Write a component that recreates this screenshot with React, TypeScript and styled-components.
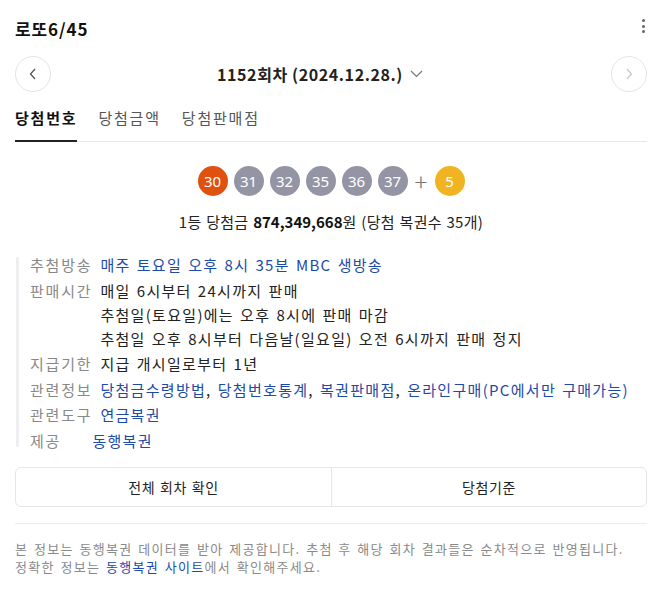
import React from "react";
import styled, { createGlobalStyle } from "styled-components";

const Global = createGlobalStyle`
  html, body { margin: 0; padding: 0; background: #fff; }
  body { font-family: "Noto Sans CJK KR", "Noto Sans", sans-serif; color: #222; }
  * { box-sizing: border-box; }
`;

const Page = styled.div`
  width: 658px;
  padding: 0 11px 0 15px;
`;

const Header = styled.div`
  display: flex;
  align-items: center;
  justify-content: space-between;
  height: 56px;
`;

const Title = styled.h1`
  margin: 0;
  font-size: 17px;
  font-weight: 700;
  color: #111;
  letter-spacing: 0.9px;
`;

const MoreBtn = styled.button`
  border: 0;
  background: none;
  padding: 0;
  width: 8px;
  height: 20px;
  display: flex;
  flex-direction: column;
  align-items: center;
  justify-content: center;
  gap: 2.5px;
  margin-right: 0;
  margin-top: -4px;
  span { width: 3px; height: 3px; border-radius: 50%; background: #666; }
`;

const NavRow = styled.div`
  display: flex;
  align-items: center;
  justify-content: space-between;
  height: 36px;
`;

const CircleBtn = styled.button<{ $disabled?: boolean }>`
  width: 36px;
  height: 36px;
  border-radius: 50%;
  border: 1px solid #e4e4e4;
  background: #fff;
  padding: 0;
  display: flex;
  align-items: center;
  justify-content: center;
  svg { stroke: ${(p) => (p.$disabled ? "#c8c8c8" : "#555")}; }
`;

const RoundTitle = styled.div`
  display: flex;
  align-items: center;
  gap: 7px;
  margin-right: 22px;
  font-size: 16px;
  font-weight: 700;
  color: #222;
  letter-spacing: 0.6px;
`;

const Tabs = styled.div`
  display: flex;
  gap: 21px;
  margin-top: 8px;
  border-bottom: 1px solid #e8e8e8;
`;

const Tab = styled.div<{ $active?: boolean }>`
  font-size: 15px;
  line-height: 24px;
  padding: 6px 0 10px;
  letter-spacing: 1.8px;
  color: ${(p) => (p.$active ? "#111" : "#555")};
  font-weight: ${(p) => (p.$active ? 700 : 400)};
  border-bottom: 2px solid ${(p) => (p.$active ? "#222" : "transparent")};
  margin-bottom: -1px;
`;

const Balls = styled.div`
  display: flex;
  justify-content: center;
  align-items: center;
  gap: 6px;
  margin-top: 24px;
`;

const Ball = styled.div<{ $color: string }>`
  width: 30px;
  height: 30px;
  border-radius: 50%;
  background: ${(p) => p.$color};
  color: #fff;
  font-size: 15px;
  display: flex;
  align-items: center;
  justify-content: center;
  font-family: "Noto Sans", "Noto Sans CJK KR", sans-serif;
`;

const Plus = styled.span`
  font-size: 24px;
  color: #777;
  width: 15px;
  text-align: center;
  line-height: 30px;
  font-weight: 300;
`;

const Prize = styled.p`
  margin: 14px 0 0;
  text-align: center;
  font-size: 15px;
  line-height: 24px;
  color: #222;
  letter-spacing: 0.3px;
  word-spacing: 1px;
  b { font-weight: 700; color: #111; letter-spacing: 0; }
`;

const InfoList = styled.dl`
  position: relative;
  margin: 19px 0 0 1px;
  padding: 0 0 0 14px;
  display: grid;
  grid-template-columns: auto 1fr;
  row-gap: 1.5px;
  font-size: 15px;
  line-height: 24px;
  letter-spacing: 1.3px;
  word-spacing: 1.5px;
  &::before {
    content: "";
    position: absolute;
    left: 0;
    top: 4px;
    bottom: 6px;
    width: 3px;
    background: #efefef;
  }
`;

const Label = styled.dt`
  color: #888;
  margin: 0;
  letter-spacing: 1.8px;
`;

const Value = styled.dd<{ $indent?: number }>`
  margin: 0;
  padding-left: ${(p) => p.$indent ?? 8}px;
  color: #222;
`;

const Link = styled.a`
  color: #1c4aa8;
  text-decoration: none;
`;

const Buttons = styled.div`
  margin-top: 14px;
  display: grid;
  grid-template-columns: 1fr 1fr;
  border: 1px solid #e6e6e6;
  border-radius: 6px;
  height: 40px;
`;

const Btn = styled.button<{ $divider?: boolean }>`
  border: 0;
  background: none;
  font-family: inherit;
  font-size: 14px;
  color: #222;
  letter-spacing: 0.6px;
  word-spacing: 1px;
  border-left: ${(p) => (p.$divider ? "1px solid #e6e6e6" : "0")};
`;

const Footer = styled.div`
  margin-top: 16px;
  border-top: 1px solid #ececec;
  padding-top: 16px;
  font-size: 13px;
  line-height: 18px;
  color: #8a8a8a;
  letter-spacing: 1.3px;
  word-spacing: 1.5px;
`;

const FooterLink = styled.a`
  color: #1c4aa8;
  text-decoration: none;
`;

const Chevron = ({ dir }: { dir: "left" | "right" }) => (
  <svg width="12" height="14" viewBox="0 0 12 14" fill="none" strokeWidth="1.3">
    {dir === "left" ? <path d="M8 2 L3.5 7 L8 12" /> : <path d="M4 2 L8.5 7 L4 12" />}
  </svg>
);

export default function App() {
  return (
    <>
      <Global />
      <Page>
        <Header>
          <Title>로또6/45</Title>
          <MoreBtn aria-label="more">
            <span />
            <span />
            <span />
          </MoreBtn>
        </Header>
        <NavRow>
          <CircleBtn aria-label="prev">
            <Chevron dir="left" />
          </CircleBtn>
          <RoundTitle>
            1152회차 (2024.12.28.)
            <svg width="13" height="8" viewBox="0 0 13 8" fill="none" stroke="#777" strokeWidth="1.2">
              <path d="M1 1 L6.5 6.5 L12 1" />
            </svg>
          </RoundTitle>
          <CircleBtn $disabled aria-label="next">
            <Chevron dir="right" />
          </CircleBtn>
        </NavRow>
        <Tabs>
          <Tab $active>당첨번호</Tab>
          <Tab>당첨금액</Tab>
          <Tab>당첨판매점</Tab>
        </Tabs>
        <Balls>
          <Ball $color="#e0500f">30</Ball>
          <Ball $color="#9395a4">31</Ball>
          <Ball $color="#9395a4">32</Ball>
          <Ball $color="#9395a4">35</Ball>
          <Ball $color="#9395a4">36</Ball>
          <Ball $color="#9395a4">37</Ball>
          <Plus>+</Plus>
          <Ball $color="#f0b423">5</Ball>
        </Balls>
        <Prize>
          1등 당첨금 <b>874,349,668</b>원 (당첨 복권수 35개)
        </Prize>
        <InfoList>
          <Label>추첨방송</Label>
          <Value>
            <Link>매주 토요일 오후 8시 35분 MBC 생방송</Link>
          </Value>
          <Label>판매시간</Label>
          <Value>
            매일 6시부터 24시까지 판매
            <br />
            추첨일(토요일)에는 오후 8시에 판매 마감
            <br />
            추첨일 오후 8시부터 다음날(일요일) 오전 6시까지 판매 정지
          </Value>
          <Label>지급기한</Label>
          <Value>지급 개시일로부터 1년</Value>
          <Label>관련정보</Label>
          <Value>
            <Link>당첨금수령방법</Link>, <Link>당첨번호통계</Link>, <Link>복권판매점</Link>,{" "}
            <Link>온라인구매(PC에서만 구매가능)</Link>
          </Value>
          <Label>관련도구</Label>
          <Value>
            <Link>연금복권</Link>
          </Value>
          <Label>제공</Label>
          <Value $indent={0}>
            <Link>동행복권</Link>
          </Value>
        </InfoList>
        <Buttons>
          <Btn>전체 회차 확인</Btn>
          <Btn $divider>당첨기준</Btn>
        </Buttons>
        <Footer>
          본 정보는 동행복권 데이터를 받아 제공합니다. 추첨 후 해당 회차 결과들은 순차적으로 반영됩니다.
          <br />
          정확한 정보는 <FooterLink>동행복권 사이트</FooterLink>에서 확인해주세요.
        </Footer>
      </Page>
    </>
  );
}
